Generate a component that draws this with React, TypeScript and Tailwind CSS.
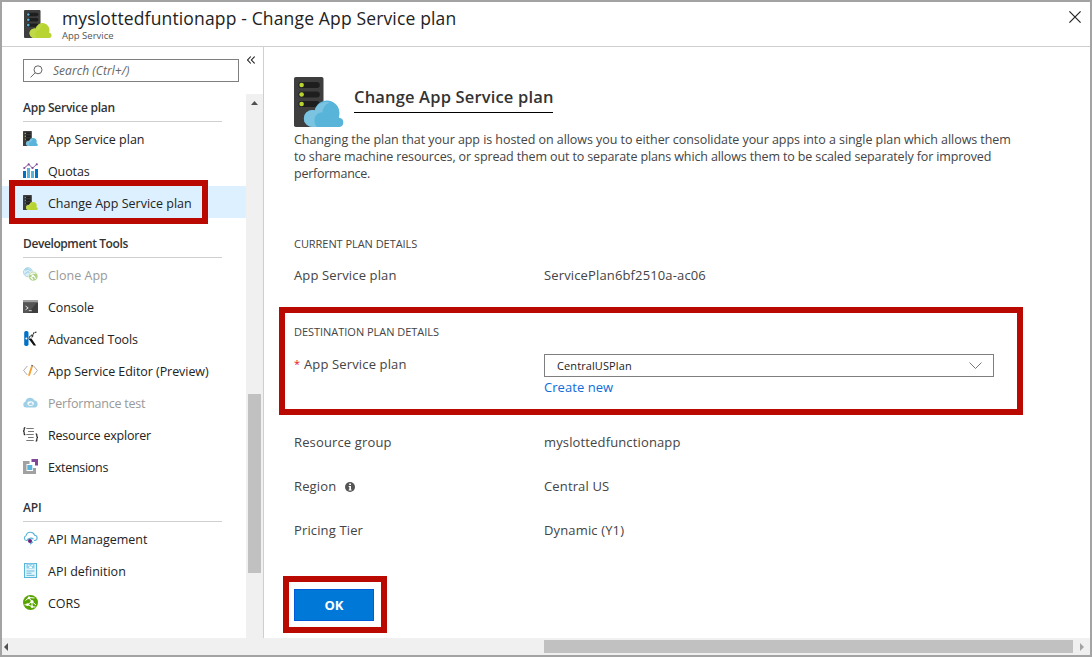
import React from "react";

type IconProps = { className?: string };

function ServerIcon({ className, led, cloud, cloudLight }: IconProps & { led: string; cloud: string; cloudLight: string }) {
  return (
    <svg viewBox="0 0 50 50" className={className}>
      <rect width="29.5" height="50" rx="1.8" fill="#3e3e3e" />
      {[5, 14.5, 24].map((y) => (
        <g key={y}>
          <rect x="4.3" y={y} width="21.5" height="6" rx="3" fill="#1e1e1e" />
          <circle cx="7.6" cy={y + 3} r="2.3" fill={led} />
        </g>
      ))}
      <path
        d="M18.500 50a8.500 8.500 0 0 1-.3-17c.9 0 1.700.1 2.500.4A12.400 12.400 0 0 1 45.200 38.500c0 .9-.1 1.500-.2 2.200A4.700 4.700 0 0 1 45.500 50z"
        fill={cloud}
      />
      <path
        d="M21.500 50h-3a8.500 8.500 0 0 1-.3-17c.9 0 1.700.1 2.500.4A12.400 12.400 0 0 1 36 25.500c-4.500 1.500-7.200 5.500-7.500 9.700-5 .3-8 4-8 8 0 3 .8 5.200 2.600 6.800z"
        fill={cloudLight}
      />
    </svg>
  );
}

function GreenServer({ className }: IconProps) {
  return <ServerIcon className={className} led="#59b4d9" cloud="#b8d432" cloudLight="#bfd946" />;
}

function BlueServer({ className }: IconProps) {
  return <ServerIcon className={className} led="#b8d432" cloud="#59b4d9" cloudLight="#7ac3e1" />;
}

function QuotasIcon({ className }: IconProps) {
  return (
    <svg viewBox="0 0 15 15" className={className}>
      <rect x="0" y="8" width="3" height="7" fill="#0072c6" />
      <rect x="4" y="5" width="3" height="10" fill="#59b4d9" />
      <rect x="8" y="8" width="3" height="7" fill="#59b4d9" />
      <rect x="12" y="6" width="3" height="9" fill="#0072c6" />
      <path d="M1.300 5 5.700 1.200 9.500 5.200 13.800 1.200" fill="none" stroke="#804998" strokeWidth=".9" />
      <g fill="#804998">
        <circle cx="1.300" cy="5" r="1.100" />
        <circle cx="5.700" cy="1.400" r="1.100" />
        <circle cx="9.500" cy="5" r="1.100" />
        <circle cx="13.800" cy="1.300" r="1.100" />
      </g>
    </svg>
  );
}

function CloneIcon({ className }: IconProps) {
  return (
    <svg viewBox="0 0 15 15" className={className}>
      <circle cx="5" cy="5.200" r="4.500" fill="#d8edf6" stroke="#9fd2e8" />
      <path d="M2 3.500 5 2l3 2M2 7l3-2.500 2 2.500M4 .8 2.500 3.500" fill="none" stroke="#9fd2e8" strokeWidth="1.200" />
      <circle cx="10.200" cy="9.300" r="4.700" fill="#a5cf7c" stroke="#fff" strokeWidth=".5" />
      <path d="m7 7.500 2.500-1.500 3 .2M8.500 7.500l3 2.200 1 2M11 8.500 8 10.500l2 2" fill="none" stroke="#fff" strokeWidth="1.100" />
    </svg>
  );
}

function ConsoleIcon({ className }: IconProps) {
  return (
    <svg viewBox="0 0 15 15" className={className}>
      <path d="M0 1h15v13H0z" fill="#3e3e3e" />
      <path d="M0 1h15v2.500H0z" fill="#a0a1a2" />
      <path d="M0 3.500h14L5 14H0z" fill="#555" />
      <path d="m2.500 7 2.700 1.900-2.700 1.900M5.800 11.700h3" fill="none" stroke="#eee" strokeWidth=".9" />
    </svg>
  );
}

function AdvancedIcon({ className }: IconProps) {
  return (
    <svg viewBox="0 0 15 15" className={className}>
      <rect x="1.200" y="0" width="4.300" height="15" rx="1.800" fill="#0072c6" />
      <circle cx="3.400" cy="7.400" r="1" fill="#fff" />
      <path d="M5.300 7.500 8.500 7.600l4.600 6.800H10.700L6.500 9z" fill="#111" />
      <path d="M6 6.700 8.700 3.800M8.300 4.300l2-.4.400-1.900 2.800-1.100M8.600 6.300l1.900-1.800" fill="none" stroke="#333" strokeWidth="1.100" strokeDasharray="2 .5" />
    </svg>
  );
}

function EditorIcon({ className }: IconProps) {
  return (
    <svg viewBox="0 0 15 15" className={className}>
      <path d="M4.300 3 .6 7.500 4.300 12M10.700 3l3.700 4.500-3.700 4.500" fill="none" stroke="#a0a1a2" strokeWidth=".9" />
      <path d="m8.200 2.800 1.700.6-3 9-1.500 1.100-.1-2z" fill="#f8a02c" />
      <path d="m8.200 2.800.4-1 1.700.6-.4 1z" fill="#555" />
    </svg>
  );
}

function PerfIcon({ className }: IconProps) {
  return (
    <svg viewBox="0 0 15 15" className={className}>
      <path d="M3 12.500A2.900 2.900 0 0 1 2.400 6.800 4.800 4.800 0 0 1 11.500 5.600a3.500 3.500 0 0 1 .3 6.900z" fill="#93cbe5" />
      <ellipse cx="7.600" cy="8.600" rx="3.200" ry="2.300" fill="#fff" />
      <path d="M6 9.700a1.700 1.700 0 0 1 3.400 0zM7.500 9l1.700-2" fill="#93cbe5" stroke="#93cbe5" strokeWidth=".6" />
    </svg>
  );
}

function ResourceIcon({ className }: IconProps) {
  return (
    <svg viewBox="0 0 15 15" className={className}>
      <path d="M2.300.6C1 .6 1.200 1.500 1.200 2.500S1 4 .2 4.200c.8.200 1 .8 1 1.800S1 7.700 2.300 7.700M12.700 6.900c1.300 0 1.100.8 1.100 1.900s.2 1.400 1 1.700c-.8.200-1 .7-1 1.800s.2 1.900-1.100 1.900" fill="none" stroke="#222" strokeWidth="1.200" />
      <path d="M3.300 1.500h7.400M5 4.500h6M3.300 7.500h7.400M5 10.500h5.700M3.300 13.500h7.400" stroke="#777" />
    </svg>
  );
}

function ExtensionsIcon({ className }: IconProps) {
  return (
    <svg viewBox="0 0 15 15" className={className}>
      <path d="M0 2h6.500v3H3.500v7H10V9h3v6H0z" fill="#a0a1a2" />
      <rect x="4.300" y="6" width="5" height="5" fill="#59b4d9" />
      <path d="M8.500 0H15v6.500h-3V3H8.500z" fill="#804998" />
    </svg>
  );
}

function ApiManagementIcon({ className }: IconProps) {
  return (
    <svg viewBox="0 0 15 15" className={className}>
      <path d="M4.500 9.500H3.300A2.500 2.500 0 0 1 3 4.700 4.500 4.500 0 0 1 11.600 4.200a2.700 2.700 0 0 1 .5 5.300H11" fill="none" stroke="#59b4d9" strokeWidth="1.100" />
      <path d="M4 9.500A4 3.500 0 0 1 10.500 8.200M10 10.700 7 13.200" fill="none" stroke="#59b4d9" strokeWidth="1.200" />
      <circle cx="7" cy="10" r="2" fill="#68217a" />
    </svg>
  );
}

function ApiDefinitionIcon({ className }: IconProps) {
  return (
    <svg viewBox="0 0 15 15" className={className}>
      <rect x="1.500" y=".5" width="12" height="14" fill="#e3f4fb" stroke="#59b4d9" />
      <path d="M3.500.5h8v5h-8z" fill="#8fd0ea" />
      <path d="m5 2 2.500 1.500L10 2M6 4.500h3" fill="none" stroke="#fff" />
      <path d="M3.500 8h8M3.500 10.200h5M3.500 12.400h8" stroke="#59b4d9" strokeWidth=".9" />
    </svg>
  );
}

function CorsIcon({ className }: IconProps) {
  return (
    <svg viewBox="0 0 15 15" className={className}>
      <circle cx="7.500" cy="7.500" r="7.500" fill="#57a300" />
      <path d="m2.500 5.500 3.500-3 5.500.5M6 3l3 3.500 4 3.500M9 6.500 4.500 9.700l-3 .1M5 9.500l4 2.300 3.500.2M9 7v4.800" fill="none" stroke="#fff" strokeWidth="1" />
      <g fill="#fff">
        <circle cx="6" cy="2.900" r="1.300" />
        <circle cx="9" cy="6.500" r="1.500" />
        <circle cx="4.500" cy="9.700" r="1.400" />
        <circle cx="9" cy="11.800" r="1.200" />
      </g>
    </svg>
  );
}

type Item = { label: string; icon: React.ComponentType<IconProps>; muted?: boolean; active?: boolean; tracking?: string };

const sections: { title: string; tracking: string; items: Item[] }[] = [
  {
    title: "App Service plan",
    tracking: "tracking-[-0.25px]",
    items: [
      { label: "App Service plan", icon: BlueServer },
      { label: "Quotas", icon: QuotasIcon, tracking: "tracking-[-0.1px]" },
      { label: "Change App Service plan", icon: GreenServer, active: true },
    ],
  },
  {
    title: "Development Tools",
    tracking: "tracking-[-0.4px]",
    items: [
      { label: "Clone App", icon: CloneIcon, muted: true },
      { label: "Console", icon: ConsoleIcon, tracking: "tracking-[-0.1px]" },
      { label: "Advanced Tools", icon: AdvancedIcon, tracking: "tracking-[-0.1px]" },
      { label: "App Service Editor (Preview)", icon: EditorIcon, tracking: "tracking-[-0.06px]" },
      { label: "Performance test", icon: PerfIcon, muted: true, tracking: "tracking-[-0.22px]" },
      { label: "Resource explorer", icon: ResourceIcon, tracking: "tracking-[-0.2px]" },
      { label: "Extensions", icon: ExtensionsIcon, tracking: "tracking-[-0.27px]" },
    ],
  },
  {
    title: "API",
    tracking: "tracking-[-0.2px]",
    items: [
      { label: "API Management", icon: ApiManagementIcon },
      { label: "API definition", icon: ApiDefinitionIcon },
      { label: "CORS", icon: CorsIcon },
    ],
  },
];

function Sidebar() {
  return (
    <aside className="flex w-[262px] shrink-0 flex-col border-r border-[#cfcfcf]">
      <div className="flex h-[47px] shrink-0 items-start pl-[21px] pt-3">
        <div className="flex h-[23px] w-[216px] items-center border border-[#7f7f7f] pl-[6px]">
          <svg viewBox="0 0 13 13" className="mt-0.5 size-[13px]" fill="none" stroke="#666">
            <circle cx="8" cy="4.800" r="4" />
            <path d="M5.200 7.700.6 12.400" />
          </svg>
          <span className="ml-[10px] text-[12px] italic tracking-[0.05px] text-[#666]">Search (Ctrl+/)</span>
        </div>
        <svg viewBox="0 0 8 8" className="ml-2 mt-[-3px] size-2" fill="none" stroke="#222" strokeWidth="1.100">
          <path d="M3.800.5.6 4l3.200 3.500M7.600.5 4.400 4l3.200 3.500" />
        </svg>
      </div>
      <div className="flex min-h-0 flex-1">
        <nav className="-mt-3 w-[244px]">
          {sections.map((s) => (
            <section key={s.title}>
              <h2 className={`ml-[21px] flex h-10 w-[199px] items-center border-b border-[#cfcfcf] pt-3 text-[12px] font-semibold text-[#333] ${s.tracking}`}>
                {s.title}
              </h2>
              {s.items.map((it) => (
                <div key={it.label} className={`relative flex h-8 items-center pl-[21px] ${it.active ? "bg-[#ddf0ff]" : ""}`}>
                  <it.icon className={`mt-px size-[15px] shrink-0 ${it.muted ? "opacity-90" : ""}`} />
                  <span className={`ml-[10px] mt-1 whitespace-nowrap text-[12.500px] ${it.tracking ?? ""} ${it.muted ? "text-[#999]" : "text-[#222]"}`}>
                    {it.label}
                  </span>
                  {it.active && <div className="absolute -top-[6px] left-[7px] h-11 w-[199px] border-[6px] border-[#ba0900]" />}
                </div>
              ))}
            </section>
          ))}
        </nav>
        <div className="flex w-[17px] flex-col items-center bg-[#f0f0f0]">
          <svg viewBox="0 0 7 4" className="mt-[7px] h-1 w-[7px]">
            <path d="M0 4 3.500 0 7 4z" fill="#505050" />
          </svg>
          <div className="mt-[289px] h-[179px] w-[13px] bg-[#c1c1c1]" />
        </div>
      </div>
    </aside>
  );
}

function Row({ label, value, info }: { label: string; value: string; info?: boolean }) {
  return (
    <div className="flex h-11 items-center pt-0.5 text-[13px] tracking-[0.14px]">
      <div className="flex w-[250px] items-center">
        {label}
        {info && (
          <svg viewBox="0 0 10 10" className="ml-[9px] size-[10px]">
            <circle cx="5" cy="5" r="5" fill="#555" />
            <path d="M4.200 1.500h1.800v1.500H4.200zM3.700 4h2.300v3.400h.6v1H3.700v-1h.6V5h-.6z" fill="#fff" />
          </svg>
        )}
      </div>
      <div>{value}</div>
    </div>
  );
}

export default function App() {
  return (
    <div className="flex h-[657px] w-[1092px] flex-col overflow-hidden border-2 border-[#a3a3a3] bg-white font-['Open_Sans',sans-serif] text-[#444]">
      <header className="flex h-[45px] shrink-0 border-b border-[#cfcfcf] pl-[22px] pt-2">
        <GreenServer className="size-7" />
        <div className="ml-[10px] flex flex-col">
          <h1 className="-mt-0.5 text-[17.500px] font-medium leading-5 tracking-[0.15px] text-[#222]">myslottedfuntionapp - Change App Service plan</h1>
          <p className="mt-[2px] text-[9.500px] leading-3 text-[#555]">App Service</p>
        </div>
        <svg viewBox="0 0 12 12" className="ml-auto mr-[9px] mt-px size-3" fill="none" stroke="#222" strokeWidth="1.200">
          <path d="m.4.4 11.200 11.200M11.600.4.4 11.600" />
        </svg>
      </header>
      <div className="flex h-[591px] shrink-0">
        <Sidebar />
        <main className="flex flex-1 flex-col pl-[30px] pt-[30px] text-[12.500px]">
          <div className="flex h-[50px]">
            <BlueServer className="size-[50px]" />
            <h2 className="ml-[10px] mt-2 h-7 w-[199px] whitespace-nowrap border-b border-black text-[16.500px] font-semibold leading-6 tracking-[0.17px] text-[#333]">
              Change App Service plan
            </h2>
          </div>
          <p className="mt-1 h-[51px] whitespace-nowrap leading-[17px]">
            <span className="block tracking-[-0.055px]">
              Changing the plan that your app is hosted on allows you to either consolidate your apps into a single plan which allows them
            </span>
            <span className="block tracking-[-0.13px]">
              to share machine resources, or spread them out to separate plans which allows them to be scaled separately for improved
            </span>
            <span className="block tracking-[-0.25px]">performance.</span>
          </p>
          <h3 className="mt-[54px] h-4 text-[11px] leading-4 tracking-[-0.05px]">CURRENT PLAN DETAILS</h3>
          <div className="mt-[1px]">
            <Row label="App Service plan" value="ServicePlan6bf2510a-ac06" />
          </div>
          <section className="-ml-[15px] mt-[10px] h-[108px] w-[744px] shrink-0 border-[6px] border-[#ba0900] pl-[9px] pt-[11px]">
            <h3 className="h-4 text-[11px] leading-4 tracking-[-0.03px]">DESTINATION PLAN DETAILS</h3>
            <div className="mt-[14px] flex">
              <div className="flex w-[250px] text-[13px] leading-5 tracking-[0.14px]">
                <span className="w-[10px] text-[11px] text-[#e81123]">*</span>App Service plan
              </div>
              <div className="w-[450px]">
                <div className="flex h-[23px] items-center border border-[#7f7f7f] pl-3 pr-[11px] text-[11px] tracking-[0.1px] text-[#222]">
                  <span className="pt-0.5">CentralUSPlan</span>
                  <svg viewBox="0 0 13 7" className="ml-auto h-[7px] w-[13px]" fill="none" stroke="#777">
                    <path d="m.5.5 6 6 6-6" />
                  </svg>
                </div>
                <a className="block text-[13px] leading-5 tracking-[0.05px] text-[#0f6cd9]">Create new</a>
              </div>
            </div>
          </section>
          <div className="mt-[5px]">
            <Row label="Resource group" value="myslottedfunctionapp" />
            <Row label="Region" value="Central US" info />
            <Row label="Pricing Tier" value="Dynamic (Y1)" />
          </div>
          <div className="-ml-[11px] mt-6 flex h-[57px] w-[104px] shrink-0 border-[6px] border-[#ba0900] pl-[5px] pt-[7px]">
            <button className="h-8 w-20 border border-[#015cda] bg-[#0078d7] pt-px text-[13px] font-bold text-white">OK</button>
          </div>
        </main>
      </div>
      <div className="flex h-[17px] shrink-0 items-center bg-[#f0f0f0] pl-0.5">
        <svg viewBox="0 0 4 8" className="h-2 w-1">
          <path d="M4 0 0 4l4 4z" fill="#505050" />
        </svg>
        <div className="ml-[536px] h-[13px] w-[529px] bg-[#c1c1c1]" />
        <svg viewBox="0 0 4 8" className="ml-[7px] h-2 w-1">
          <path d="m0 0 4 4-4 4z" fill="#a3a3a3" />
        </svg>
      </div>
    </div>
  );
}
